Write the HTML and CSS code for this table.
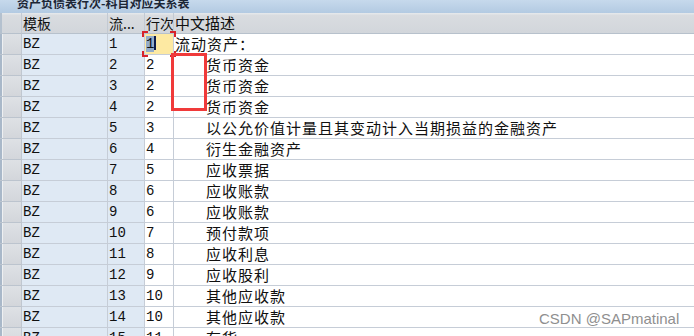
FILE: index.html
```html
<!DOCTYPE html>
<html lang="zh">
<head>
<meta charset="utf-8">
<title>资产负债表行次-科目对应关系表</title>
<link rel="stylesheet" href="styles.css">
</head>
<body>
<div class="page">
  <div class="titlebar"><span class="title">资产负债表行次-科目对应关系表</span></div>
  <div class="grid">
    <div class="hd sel-h"></div>
    <div class="hd">模板</div>
    <div class="hd">流...</div>
    <div class="hd">行次</div>
    <div class="hd last">中文描述</div>

    <div class="sel"></div><div class="c key">BZ</div><div class="c key">1</div><div class="c focus"><span class="hl">1</span><span class="caret"></span><svg class="corners" width="34" height="26" viewBox="0 0 34 26"><path d="M1 6V1H6M28 1H33V6M33 20V25H28M6 25H1V20" fill="none" stroke="#d8242a" stroke-width="2"/></svg></div><div class="c desc top">流动资产：</div>
    <div class="sel"></div><div class="c key">BZ</div><div class="c key">2</div><div class="c">2</div><div class="c desc">货币资金</div>
    <div class="sel"></div><div class="c key">BZ</div><div class="c key">3</div><div class="c">2</div><div class="c desc">货币资金</div>
    <div class="sel"></div><div class="c key">BZ</div><div class="c key">4</div><div class="c">2</div><div class="c desc">货币资金</div>
    <div class="sel"></div><div class="c key">BZ</div><div class="c key">5</div><div class="c">3</div><div class="c desc">以公允价值计量且其变动计入当期损益的金融资产</div>
    <div class="sel"></div><div class="c key">BZ</div><div class="c key">6</div><div class="c">4</div><div class="c desc">衍生金融资产</div>
    <div class="sel"></div><div class="c key">BZ</div><div class="c key">7</div><div class="c">5</div><div class="c desc">应收票据</div>
    <div class="sel"></div><div class="c key">BZ</div><div class="c key">8</div><div class="c">6</div><div class="c desc">应收账款</div>
    <div class="sel"></div><div class="c key">BZ</div><div class="c key">9</div><div class="c">6</div><div class="c desc">应收账款</div>
    <div class="sel"></div><div class="c key">BZ</div><div class="c key">10</div><div class="c">7</div><div class="c desc">预付款项</div>
    <div class="sel"></div><div class="c key">BZ</div><div class="c key">11</div><div class="c">8</div><div class="c desc">应收利息</div>
    <div class="sel"></div><div class="c key">BZ</div><div class="c key">12</div><div class="c">9</div><div class="c desc">应收股利</div>
    <div class="sel"></div><div class="c key">BZ</div><div class="c key">13</div><div class="c">10</div><div class="c desc">其他应收款</div>
    <div class="sel"></div><div class="c key">BZ</div><div class="c key">14</div><div class="c">10</div><div class="c desc">其他应收款</div>
    <div class="sel"></div><div class="c key">BZ</div><div class="c key">15</div><div class="c">11</div><div class="c desc">存货</div>
  </div>
  <div class="redbox"></div>
  <div class="watermark">CSDN @SAPmatinal</div>
</div>
</body>
</html>
```
FILE: styles.css
```css
html, body {
  margin: 0;
  padding: 0;
  background: #ffffff;
}
.page {
  position: relative;
  width: 694px;
  height: 336px;
  overflow: hidden;
  font-family: "Liberation Mono", "Noto Sans CJK SC", monospace;
  color: #101010;
}
.titlebar {
  height: 13px;
  overflow: hidden;
  background: linear-gradient(#c6d9ec, #b3cae2);
  padding-left: 17px;
}
.title {
  display: block;
  margin-top: -5px;
  font-family: "Noto Sans CJK SC", sans-serif;
  font-size: 12px;
  line-height: 15px;
  font-weight: 700;
  color: #1c2636;
}
.grid {
  display: grid;
  grid-template-columns: 22px 86px 37px 29px 1fr;
  grid-auto-rows: 21px;
}
.hd {
  box-sizing: border-box;
  background: linear-gradient(#e4e7ea 0, #e4e7ea 1px, #d9dce0 2px, #d2d6db 100%);
  border-right: 1px solid #c3cad3;
  border-bottom: 1px solid #b7c1cc;
  font-family: "Noto Sans CJK SC", sans-serif;
  font-size: 14px;
  line-height: 20px;
  padding-left: 1px;
  color: #101010;
  white-space: nowrap;
  overflow: hidden;
}
.hd.last {
  border-right: none;
  font-size: 15px;
}
.sel-h {
  box-shadow: inset 2px 0 #b4c1cf;
}
.sel {
  box-sizing: border-box;
  background: linear-gradient(#dee1e5, #d3d6db);
  border-right: 1px solid #c0c7d0;
  border-bottom: 1px solid #bcc4ce;
  box-shadow: inset 2px 0 #a9b8c9, inset 3px 0 #eef0f2;
}
.c {
  box-sizing: border-box;
  border-right: 1px solid #c6cdd7;
  border-bottom: 1px solid #c6cdd7;
  font-size: 14px;
  line-height: 20px;
  padding-left: 1px;
  white-space: nowrap;
  overflow: hidden;
}
.key {
  background: #dfe9f4;
}
.desc {
  border-right: none;
  font-family: "Noto Sans CJK SC", sans-serif;
  font-size: 15px;
  letter-spacing: 1px;
  padding-left: 32px;
}
.desc.top {
  padding-left: 1px;
}
.focus {
  position: relative;
  overflow: visible;
  background: #fde9a2;
}
.hl {
  background: #93acca;
}
.caret {
  display: inline-block;
  width: 2px;
  height: 14px;
  background: #0c1a4a;
  vertical-align: -2px;
}
.corners {
  position: absolute;
  left: -3px;
  top: -3px;
}
.redbox {
  position: absolute;
  left: 171px;
  top: 53px;
  width: 36px;
  height: 58px;
  box-sizing: border-box;
  border: 3px solid #f03a3a;
}
.watermark {
  position: absolute;
  left: 539px;
  top: 310px;
  font-family: "Liberation Sans", Arial, sans-serif;
  font-size: 15px;
  color: #8f8f8f;
}
```
